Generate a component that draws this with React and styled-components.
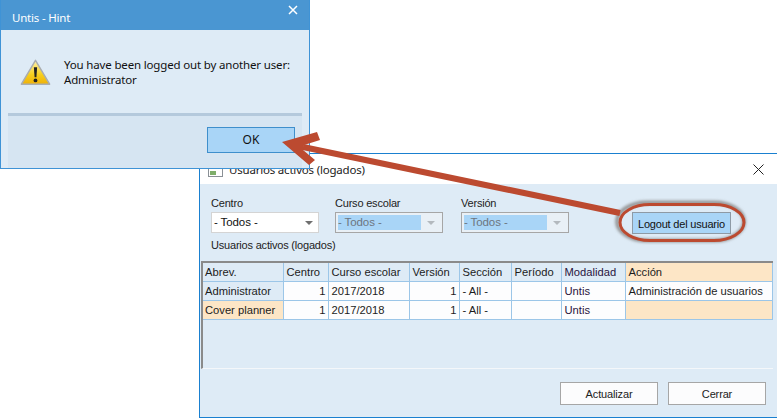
import React from 'react'
import styled, { createGlobalStyle } from 'styled-components'

const GlobalStyle = createGlobalStyle`
    html, body {
        margin: 0;
        padding: 0;
        background: #fff;
    }
    body {
        width: 777px;
        height: 418px;
        overflow: hidden;
        font-family: "Liberation Sans", Arial, sans-serif;
    }
`

const Desktop = styled.div`
    position: relative;
    width: 777px;
    height: 418px;
    overflow: hidden;
    background: #fff;
`

// windows on a free canvas
const HintWindow = styled.div`
    position: absolute;
    left: 0;
    top: 0;
    z-index: 2;
    width: 310px;
    height: 169px;
    box-sizing: border-box;
    display: flex;
    flex-direction: column;
    background: #deebf6;
    border: 1px solid #3f93d6;
    border-top: 0;
`
const HintTitleBar = styled.div`
    height: 30px;
    flex: none;
    display: flex;
    justify-content: space-between;
    padding: 0 11px 0 11px;
    background: #4a96d2;
    color: #fff;
    font: 11.5px/35px "Noto Sans", sans-serif;
    letter-spacing: -0.2px;
`
const HintClose = styled.svg`
    width: 10px;
    height: 10px;
    margin-top: 5px;
`
const HintBody = styled.div`
    height: 83px;
    flex: none;
    box-sizing: border-box;
    display: flex;
    padding: 27px 0 0 19px;
    gap: 13px;
`
const WarningIcon = styled.svg`
    width: 31px;
    height: 29px;
    flex: none;
    margin-top: 1px;
`
const HintText = styled.div`
    color: #111;
    font: 11.5px/15px "Noto Sans", sans-serif;
    letter-spacing: -0.16px;
    white-space: nowrap;
`
const HintFooter = styled.div`
    height: 48px;
    margin: 0 7px;
    display: flex;
    justify-content: flex-end;
    align-items: flex-start;
    padding: 11px 7px 0 0;
    background: #d6e5f2;
    border-top: 3px solid #b4c9dc;
`
const OkButton = styled.div`
    width: 88px;
    height: 26px;
    box-sizing: border-box;
    text-align: center;
    background: #a9d5f7;
    border: 1px solid #3f8fcc;
    color: #111;
    font: 12px/24px "Noto Sans", sans-serif;
`

const MainWindow = styled.div`
    position: absolute;
    left: 199px;
    top: 153px;
    z-index: 1;
    width: 578px;
    height: 265px;
    box-sizing: border-box;
    display: flex;
    flex-direction: column;
    background: #deebf6;
    border: 1px solid #1a80d0;
    border-right: 0;
`
const MainTitleBar = styled.div`
    height: 30px;
    flex: none;
    display: flex;
    align-items: center;
    gap: 6px;
    padding: 0 13px 0 8px;
    background: #fff;
    color: #222;
    font: 11.5px/16px "Noto Sans", sans-serif;
    letter-spacing: -0.2px;
`
const TitleIcon = styled.svg`
    width: 15px;
    height: 12px;
    flex: none;
    margin-top: 4px;
`
const TitleText = styled.span`
    flex: 1;
    margin-top: 1px;
`
const MainClose = styled.svg`
    width: 11px;
    height: 11px;
`
const FilterRow = styled.div`
    display: flex;
    height: 54px;
    padding: 12px 0 0 11px;
    box-sizing: border-box;
`
const Field = styled.div`
    width: ${p => p.$width}px;
    display: flex;
    flex-direction: column;
`
const FieldLabel = styled.div`
    color: #222;
    font-size: 11px;
    line-height: 15px;
    height: 16px;
    letter-spacing: -0.2px;
`
const Select = styled.div`
    width: 108px;
    height: 21px;
    box-sizing: border-box;
    display: flex;
    align-items: stretch;
    padding: ${p => (p.$disabled ? '2px' : '0')};
    background: ${p => (p.$disabled ? '#e9f0f6' : '#fff')};
    border: 1px solid ${p => (p.$disabled ? '#a6a6a6' : '#d4d4d4')};
`
const SelectValue = styled.div`
    flex: 1;
    padding-left: ${p => (p.$disabled ? '0' : '2px')};
    background: ${p => (p.$disabled ? '#a9d5f7' : 'transparent')};
    color: ${p => (p.$disabled ? '#6d7680' : '#111')};
    font-size: 11.5px;
    letter-spacing: -0.1px;
    line-height: ${p => (p.$disabled ? '15px' : '19px')};
`
const SelectArrow = styled.div`
    width: 19px;
    flex: none;
    display: flex;
    align-items: center;
    justify-content: center;
    &::after {
        content: '';
        margin-top: 1px;
        border-left: 4px solid transparent;
        border-right: 4px solid transparent;
        border-top: 4px solid ${p => (p.$disabled ? '#b4b9be' : '#6f6f6f')};
    }
`
const LogoutSlot = styled.div`
    margin-left: 45px;
    margin-top: 16px;
`
const LogoutButton = styled.div`
    width: 99px;
    height: 22px;
    box-sizing: border-box;
    text-align: center;
    background: #a9d5f7;
    border: 1px solid #8e9aa5;
    color: #111;
    font-size: 11px;
    line-height: 22px;
    letter-spacing: -0.2px;
`
const SectionLabel = styled.div`
    padding-left: 11px;
    height: 16px;
    color: #222;
    font-size: 11px;
    line-height: 15px;
    letter-spacing: -0.2px;
`
const GridBox = styled.div`
    height: 108px;
    width: 572px;
    margin: 7px 0 0 1px;
    box-sizing: border-box;
    border-top: 2px solid #8a8a8a;
    border-left: 2px solid #8a8a8a;
    border-bottom: 1px solid #f4f7fa;
`
const Table = styled.table`
    border-collapse: collapse;
    table-layout: fixed;
    width: 569px;
    font-size: 11.2px;
    color: #222;
`
const Cell = styled.td`
    height: 18px;
    padding: 0 2px 0 ${p => (p.$first ? '2px' : '3px')};
    box-sizing: border-box;
    overflow: hidden;
    white-space: nowrap;
    border: 1px solid #9cc6e8;
    border-top: 0;
    border-left: ${p => (p.$first ? '0' : '1px solid #9cc6e8')};
    text-align: ${p => (p.$right ? 'right' : 'left')};
    background: ${p => (p.$fill ? p.$fill : '#fdfdfe')};
    color: ${p => (p.$purple ? '#2a1540' : '#1c1c1c')};
    line-height: 18px;
`
const FooterRow = styled.div`
    display: flex;
    justify-content: flex-end;
    gap: 10px;
    padding: 13px 11px 0 0;
`
const WinButton = styled.div`
    width: 98px;
    height: 23px;
    box-sizing: border-box;
    text-align: center;
    background: #fcfcfd;
    border: 1px solid #a6a6a6;
    color: #222;
    font-size: 11px;
    line-height: 22px;
    letter-spacing: -0.15px;
`

const Annotation = styled.svg`
    position: absolute;
    left: 0;
    top: 0;
    z-index: 3;
    width: 777px;
    height: 418px;
    pointer-events: none;
`

const HEADER = '#deebf6'
const HILITE = '#fde6c6'
const colWidths = [80, 45, 81, 50, 52, 50, 64, 147]
const headers = ['Abrev.', 'Centro', 'Curso escolar', 'Versión', 'Sección', 'Período', 'Modalidad', 'Acción']
const rows = [
    { name: 'Administrator', accion: 'Administración de usuarios', nameFill: HEADER, accionFill: null },
    { name: 'Cover planner', accion: '', nameFill: HILITE, accionFill: HILITE },
]

const Filter = ({ label, disabled, width }) => (
    <Field $width={width}>
        <FieldLabel>{label}</FieldLabel>
        <Select $disabled={disabled}>
            <SelectValue $disabled={disabled}>- Todos -</SelectValue>
            <SelectArrow $disabled={disabled} />
        </Select>
    </Field>
)

const App = () => (
    <Desktop>
        <GlobalStyle />
        <MainWindow>
            <MainTitleBar>
                <TitleIcon viewBox="0 0 15 12">
                    <rect x="0.5" y="0.5" width="14" height="11" fill="#fff" stroke="#8a9096" />
                    <rect x="1" y="1" width="13" height="3" fill="#6f8fb0" />
                    <rect x="2" y="6" width="6" height="4" fill="#7fae6a" />
                </TitleIcon>
                <TitleText>Usuarios activos (logados)</TitleText>
                <MainClose viewBox="0 0 11 11">
                    <path d="M0.5 0.5 L10.5 10.5 M10.5 0.5 L0.5 10.5" stroke="#222" strokeWidth="1" />
                </MainClose>
            </MainTitleBar>
            <FilterRow>
                <Filter label="Centro" width={124} />
                <Filter label="Curso escolar" width={126} disabled />
                <Filter label="Versión" width={126} disabled />
                <LogoutSlot>
                    <LogoutButton>Logout del usuario</LogoutButton>
                </LogoutSlot>
            </FilterRow>
            <SectionLabel>Usuarios activos (logados)</SectionLabel>
            <GridBox>
                <Table>
                    <colgroup>
                        {colWidths.map((w, i) => <col key={i} style={{ width: w }} />)}
                    </colgroup>
                    <tbody>
                        <tr>
                            {headers.map((h, i) => (
                                <Cell key={h} $first={i === 0} $purple={i === 6} $fill={i === 7 ? HILITE : HEADER}>{h}</Cell>
                            ))}
                        </tr>
                        {rows.map(r => (
                            <tr key={r.name}>
                                <Cell $first $fill={r.nameFill}>{r.name}</Cell>
                                <Cell $right>1</Cell>
                                <Cell>2017/2018</Cell>
                                <Cell $right>1</Cell>
                                <Cell>- All -</Cell>
                                <Cell />
                                <Cell $purple>Untis</Cell>
                                <Cell $fill={r.accionFill}>{r.accion}</Cell>
                            </tr>
                        ))}
                    </tbody>
                </Table>
            </GridBox>
            <FooterRow>
                <WinButton>Actualizar</WinButton>
                <WinButton>Cerrar</WinButton>
            </FooterRow>
        </MainWindow>

        <HintWindow>
            <HintTitleBar>
                <span>Untis - Hint</span>
                <HintClose viewBox="0 0 10 10">
                    <path d="M1 1 L9 9 M9 1 L1 9" stroke="#fff" strokeWidth="1.5" />
                </HintClose>
            </HintTitleBar>
            <HintBody>
                <WarningIcon viewBox="0 0 33 29">
                    <defs>
                        <linearGradient id="warnFill" x1="0" y1="0" x2="0" y2="1">
                            <stop offset="0" stopColor="#fdf3b0" />
                            <stop offset="0.6" stopColor="#f7cf1c" />
                            <stop offset="1" stopColor="#eeb008" />
                        </linearGradient>
                    </defs>
                    <path d="M16.5 1.5 L31.5 27 H1.5 Z" fill="url(#warnFill)" stroke="#a9adb0" strokeWidth="1.6" strokeLinejoin="round" />
                    <path d="M14.8 9 H18.2 L17.5 19.5 H15.5 Z" fill="#222" />
                    <circle cx="16.5" cy="23" r="2" fill="#222" />
                </WarningIcon>
                <HintText>
                    You have been logged out by another user:<br />
                    Administrator
                </HintText>
            </HintBody>
            <HintFooter>
                <OkButton>OK</OkButton>
            </HintFooter>
        </HintWindow>

        <Annotation viewBox="0 0 777 418">
            <defs>
                <filter id="soft" x="-20%" y="-40%" width="140%" height="180%">
                    <feGaussianBlur stdDeviation="1.8" />
                </filter>
            </defs>
            <rect x="617" y="202.5" width="127" height="38" rx="30" ry="19" fill="none" stroke="#8c8c8c" strokeWidth="3.5" filter="url(#soft)" />
            <path d="M620 213 L303 147" stroke="#bc4a30" strokeWidth="6" fill="none" />
            <path d="M282 142 L317 132 L320 140 L304 145 L303 150 L315 160 L309 165 Z" fill="#bc4a30" />
            <rect x="620" y="204.5" width="124" height="36" rx="30" ry="18" fill="none" stroke="#bc4a30" strokeWidth="3" />
        </Annotation>
    </Desktop>
)

export default App
